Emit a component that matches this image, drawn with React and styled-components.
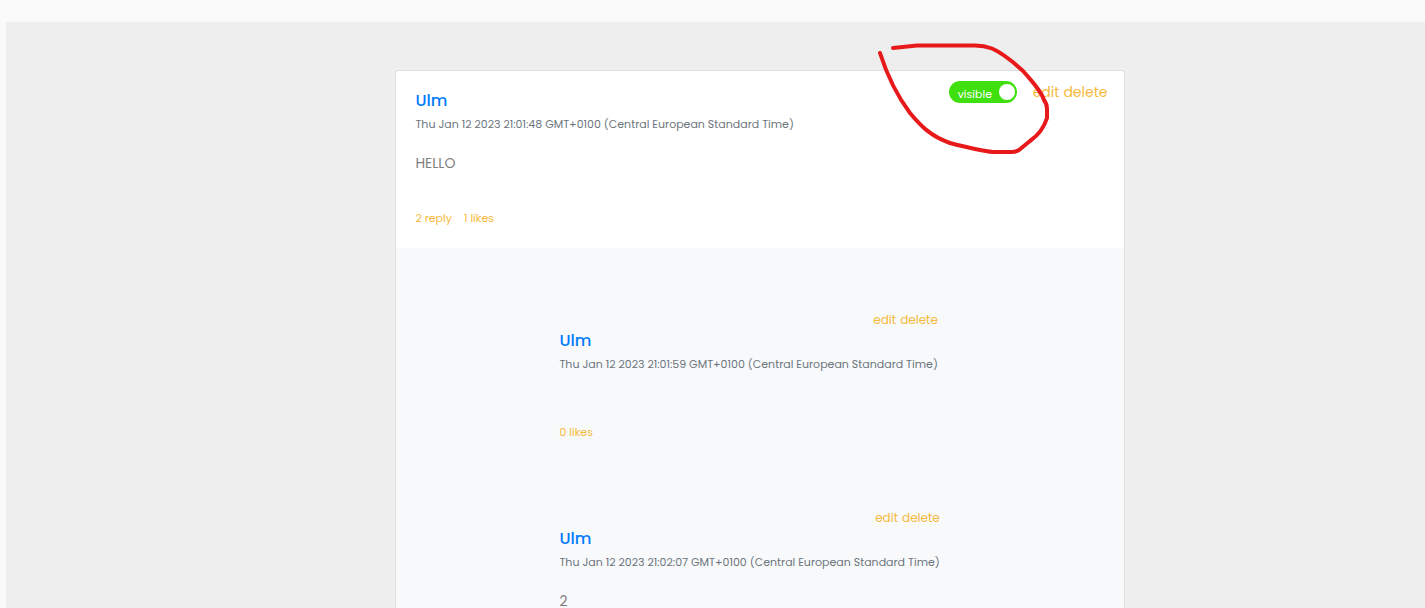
import React, { useState } from "react";
import styled, { createGlobalStyle } from "styled-components";

const GlobalStyle = createGlobalStyle`
  *, *::before, *::after { box-sizing: border-box; }
  body {
    margin: 0;
    background: #fafafa;
    font-family: Poppins, Inter, "Open Sans", sans-serif;
  }
`;

const Page = styled.main`
  display: grid;
  grid-template-columns: 13fr minmax(0, 730px) 10fr;
  min-height: calc(100vh - 22px);
  margin: 22px 0 0 6px;
  padding-top: 48px;
  background: #eeeeee;
`;

const Card = styled.article`
  grid-column: 2;
  position: relative;
  display: flex;
  flex-direction: column;
  border: 1px solid #dfdfdf;
  border-bottom: 0;
  border-radius: 4px 4px 0 0;
  background: #ffffff;
`;

const Post = styled.section`
  display: flex;
  justify-content: space-between;
  align-items: flex-start;
  padding: 18px 17px 19px 19px;
`;

const Author = styled.h2`
  margin: 0;
  color: #007bff;
  font-size: 16px;
  font-weight: 500;
  line-height: 24px;
`;

const Posted = styled.time`
  display: block;
  color: #6c757d;
  font-size: 11px;
  line-height: 22px;
  white-space: nowrap;
`;

const Message = styled.p`
  min-height: 6px;
  margin: 20px 0;
  color: #808080;
  font-size: 14px;
  line-height: 16px;

  &:last-child {
    margin-bottom: 0;
  }
`;

const Stats = styled.div`
  display: flex;
  gap: 12px;
  padding-top: ${(p) => (p.$spaced ? "16px" : "0")};
`;

const LinkButton = styled.button`
  padding: 0;
  border: 0;
  background: none;
  color: #f6b93b;
  font-family: inherit;
  font-size: ${(p) => p.$size || 11}px;
  line-height: 22px;
  cursor: pointer;
`;

const Controls = styled.div`
  display: flex;
  align-items: center;
  gap: 16px;
  margin-top: -8px;
`;

const Actions = styled.div`
  display: flex;
  gap: 4px;
`;

const Switch = styled.label`
  position: relative;
  display: flex;
  align-items: center;
  justify-content: space-between;
  width: 68px;
  height: 22px;
  padding: 0 2px 0 9px;
  border-radius: 11px;
  background: ${(p) => (p.$on ? "#3fe00d" : "#adb5bd")};
  color: #ffffff;
  font-size: 11px;
  line-height: 22px;
  cursor: pointer;
`;

const SwitchInput = styled.input`
  position: absolute;
  inset: 0;
  width: 100%;
  height: 100%;
  margin: 0;
  opacity: 0;
  cursor: pointer;
`;

const SwitchText = styled.span`
  padding-top: 3px;
`;

const Knob = styled.span`
  width: 16px;
  height: 16px;
  border-radius: 50%;
  background: #ffffff;
`;

const Replies = styled.section`
  flex: 1;
  display: flex;
  flex-direction: column;
  align-items: flex-start;
  gap: 66px;
  padding: 63px 20px 0 163px;
  background: #f8f9fb;
`;

const Reply = styled.article`
  width: fit-content;
`;

const ReplyActions = styled(Actions)`
  justify-content: flex-end;
  align-items: center;
  height: 18px;
`;

const Annotation = styled.svg`
  position: absolute;
  top: -36px;
  right: 64px;
  pointer-events: none;
`;

const replies = [
  { author: "Ulm", date: "Thu Jan 12 2023 21:01:59 GMT+0100 (Central European Standard Time)", text: "", likes: 0 },
  { author: "Ulm", date: "Thu Jan 12 2023 21:02:07 GMT+0100 (Central European Standard Time)", text: "2" },
];

export default function App() {
  const [visible, setVisible] = useState(true);
  return (
    <>
      <GlobalStyle />
      <Page>
        <Card>
          <Post>
            <div>
              <Author>Ulm</Author>
              <Posted>Thu Jan 12 2023 21:01:48 GMT+0100 (Central European Standard Time)</Posted>
              <Message>HELLO</Message>
              <Stats $spaced>
                <LinkButton>2 reply</LinkButton>
                <LinkButton>1 likes</LinkButton>
              </Stats>
            </div>
            <Controls>
              <Switch $on={visible}>
                <SwitchInput type="checkbox" checked={visible} onChange={() => setVisible(!visible)} />
                <SwitchText>visible</SwitchText>
                <Knob />
              </Switch>
              <Actions>
                <LinkButton $size={14}>edit</LinkButton>
                <LinkButton $size={14}>delete</LinkButton>
              </Actions>
            </Controls>
          </Post>
          <Replies>
            {replies.map((r) => (
              <Reply key={r.date}>
                <ReplyActions>
                  <LinkButton $size={12}>edit</LinkButton>
                  <LinkButton $size={12}>delete</LinkButton>
                </ReplyActions>
                <Author>{r.author}</Author>
                <Posted>{r.date}</Posted>
                <Message>{r.text}</Message>
                {r.likes !== undefined && (
                  <Stats>
                    <LinkButton>{r.likes} likes</LinkButton>
                  </Stats>
                )}
              </Reply>
            ))}
          </Replies>
          <Annotation width="190" height="125" viewBox="0 0 190 125" fill="none" stroke="#e8191a" strokeWidth="4" strokeLinecap="round" strokeLinejoin="round" aria-hidden="true">
            <path d="M23 13L47 10.500H105Q114 10.500 122 13.500C130 17 140 24 153 36C162 46 171 56 174 65Q177 69 177 74V83C174 93 167 101 160 106L149 115Q146 117 142 117H123Q111 116 80 108C60 101 50 90 40 78C25 58 17 40 10 18" />
          </Annotation>
        </Card>
      </Page>
    </>
  );
}
